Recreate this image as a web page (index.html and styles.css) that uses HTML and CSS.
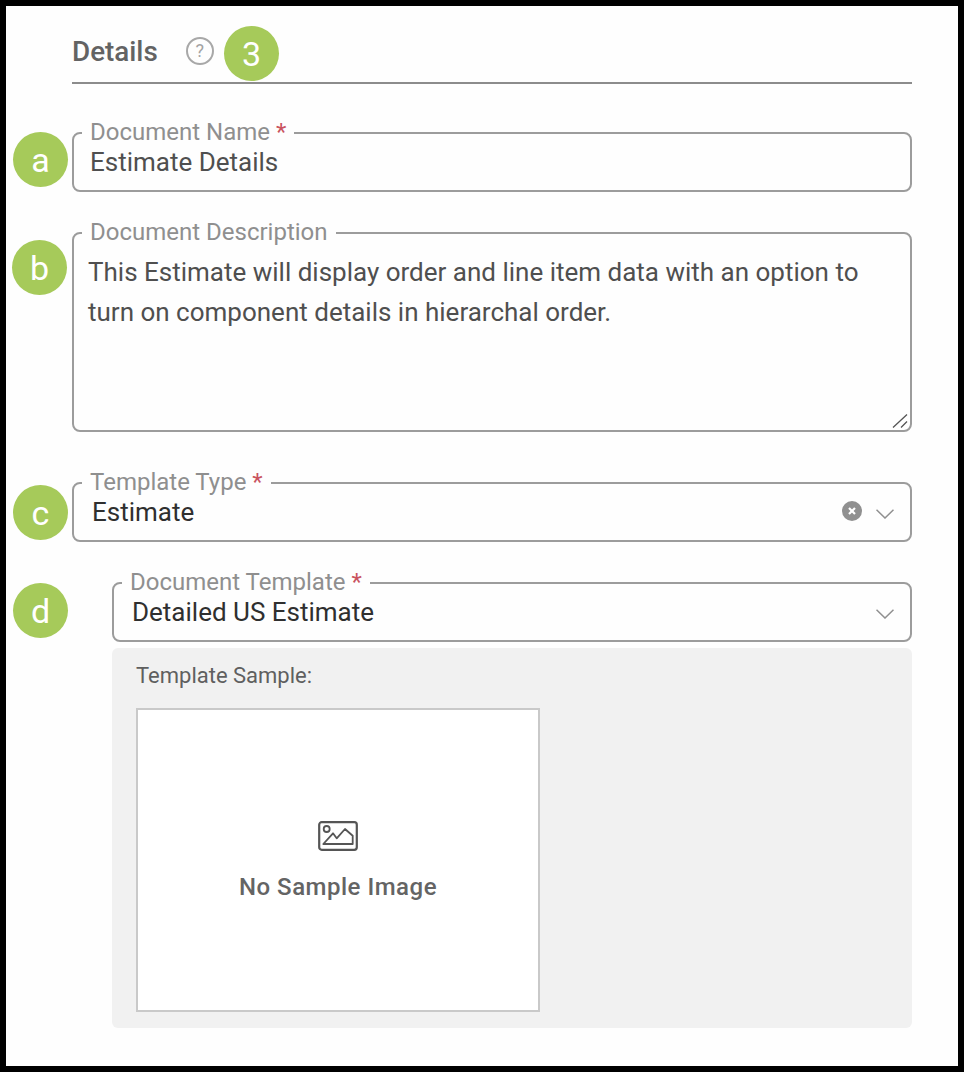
FILE: index.html
```html
<!DOCTYPE html>
<html lang="en">
<head>
<meta charset="utf-8">
<title>Details</title>
<link rel="stylesheet" href="styles.css">
</head>
<body>
<main class="frame">
  <header class="heading">
    <h1 class="heading-title">Details</h1>
    <span class="help">?</span>
  </header>

  <fieldset class="field field-name">
    <legend class="field-label">Document Name <span class="req">*</span></legend>
    <div class="field-value muted">Estimate Details</div>
  </fieldset>

  <fieldset class="field field-desc">
    <legend class="field-label">Document Description</legend>
    <div class="field-text">This Estimate will display order and line item data with an option to turn on component details in hierarchal order.</div>
    <svg class="grip" width="16" height="14" viewBox="0 0 16 14" aria-hidden="true"><path d="M1 13.500 15 .5M9 13.500l6-6" fill="none" stroke="#555" stroke-width="1.3"/></svg>
  </fieldset>

  <fieldset class="field field-type">
    <legend class="field-label">Template Type <span class="req">*</span></legend>
    <div class="select-row">
      <div class="field-value dark">Estimate</div>
      <svg class="clear" width="20" height="20" viewBox="0 0 20 20" aria-hidden="true"><circle cx="10" cy="10" r="10" fill="#909090"/><path d="M7 7l6 6M13 7l-6 6" stroke="#fff" stroke-width="2.2"/></svg>
      <svg class="chev" width="18" height="10" viewBox="0 0 18 10" aria-hidden="true"><path d="M.5.7 9 9 17.500.7" fill="none" stroke="#8f8f8f" stroke-width="1.5"/></svg>
    </div>
  </fieldset>

  <div class="nested">
    <fieldset class="field field-template">
      <legend class="field-label">Document Template <span class="req">*</span></legend>
      <div class="select-row">
        <div class="field-value dark">Detailed US Estimate</div>
        <svg class="chev" width="18" height="10" viewBox="0 0 18 10" aria-hidden="true"><path d="M.5.7 9 9 17.500.7" fill="none" stroke="#8f8f8f" stroke-width="1.5"/></svg>
      </div>
    </fieldset>

    <section class="sample">
      <div class="sample-label">Template Sample:</div>
      <div class="sample-box">
        <svg class="sample-icon" width="40" height="30" viewBox="0 0 40 30" aria-hidden="true">
          <rect x="1.200" y="1.200" width="37.600" height="27.600" rx="2.500" fill="none" stroke="#555" stroke-width="2.200"/>
          <circle cx="8.700" cy="8" r="3" fill="none" stroke="#555" stroke-width="1.800"/>
          <path d="M5.300 23 15 12.300l3.700 5L27 8l7.700 6.700V23z" fill="none" stroke="#555" stroke-width="1.800" stroke-linejoin="round"/>
        </svg>
        <div class="sample-text">No Sample Image</div>
      </div>
    </section>
  </div>

  <span class="badge badge-3">3</span>
  <span class="badge badge-a">a</span>
  <span class="badge badge-b">b</span>
  <span class="badge badge-c">c</span>
  <span class="badge badge-d">d</span>
</main>
</body>
</html>
```
FILE: styles.css
```css
* { box-sizing: border-box; }
html, body { margin: 0; padding: 0; }
body { background: #000; font-family: Roboto, "Liberation Sans", sans-serif; }
.frame {
  position: relative;
  width: 952px;
  height: 1060px;
  margin: 6px;
  padding: 0 46px 0 66px;
  background: #fefefe;
  display: flow-root;
}
.heading {
  display: flex;
  align-items: center;
  height: 78px;
  padding-top: 14px;
  border-bottom: 2px solid #8c8c8c;
  margin-bottom: 36px;
}
.heading-title { margin: 1px 0 0; font-size: 27.800px; font-weight: 500; color: #636363; }
.help {
  width: 28px; height: 28px; margin-left: 28px;
  border: 2px solid #a8a8a8; border-radius: 50%;
  display: flex; align-items: center; justify-content: center;
  font-size: 18px; color: #a3a3a3; line-height: 1;
}
.field {
  margin: 0; padding: 0 16px;
  border: 2px solid #9c9c9c;
  border-radius: 8px;
  min-inline-size: 0;
  position: relative;
}
.field-label {
  padding: 0 8px;
  margin-left: -8px;
  font-size: 24px; line-height: 25px;
  color: #8f8f8f;
  white-space: nowrap;
}
.req { color: #c9535f; }
.field-value { font-size: 26px; line-height: 30px; white-space: nowrap; padding-top: 2px; }
.muted { color: #4f4f4f; }
.dark { color: #2f2f2f; padding-left: 2px; flex: 1; }
.field-name { height: 72px; margin-bottom: 28px; }
.field-desc { height: 212px; margin-bottom: 38px; padding-left: 14px; }
.field-desc .field-label { margin-left: -6px; }
.field-text { font-size: 26px; line-height: 40px; color: #4f4f4f; padding-top: 7px; width: 800px; }
.grip { position: absolute; right: 2px; bottom: 2px; }
.field-type { height: 72px; margin-bottom: 28px; }
.select-row { display: flex; align-items: center; height: 32px; }
.clear { margin-right: 14px; }
.chev { margin-top: 6px; }
.nested { margin-left: 40px; }
.field-template { height: 72px; margin-bottom: 6px; }
.sample {
  height: 380px;
  padding: 16px 24px;
  background: #f1f1f1;
  border-radius: 6px;
}
.sample-label { font-size: 22px; line-height: 24px; color: #5f5f5f; margin-bottom: 20px; }
.sample-box {
  width: 404px; height: 304px;
  background: #fff;
  border: 2px solid #c9c9c9;
  display: flex; flex-direction: column; align-items: center;
  padding-top: 111px;
}
.sample-text { margin-top: 21px; font-size: 24px; line-height: 30px; font-weight: 500; color: #646464; letter-spacing: .5px; }
.badge {
  position: absolute;
  width: 55px; height: 55px;
  border-radius: 50%;
  background: #a6ca5a;
  color: #fff;
  font-size: 34px;
  line-height: 56px;
  text-align: center;
}
.badge-3 { left: 218px; top: 20px; }
.badge-a { left: 7px; top: 126px; }
.badge-b { left: 6px; top: 234px; }
.badge-c { left: 7px; top: 479px; }
.badge-d { left: 7px; top: 577px; }
```
